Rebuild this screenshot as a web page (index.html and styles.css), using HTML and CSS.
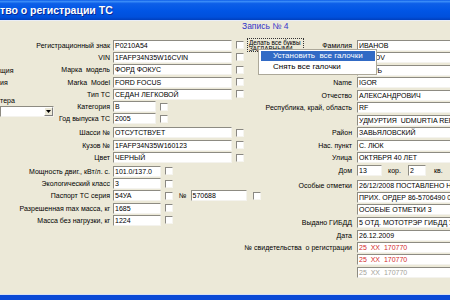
FILE: index.html
```html
<!DOCTYPE html>
<html lang="ru">

<head>
  <meta charset="UTF-8">
  <title>Свидетельство о регистрации ТС</title>
  <link rel="stylesheet" href="styles.css">
</head>

<body>
  <div class="window">
    <header class="titlebar">
      <span class="title">тво о регистрации ТС</span>
    </header>

    <main class="client">
      <!-- край соседней панели -->
      <section class="side">
        <div class="side-label">щия</div>
        <div class="side-label">ия</div>
        <div class="side-label side-gap">тера</div>
        <div class="combo">
          <span class="combo-btn">
            <svg width="5" height="3" viewBox="0 0 5 3"><path d="M0 0h5L2.5 3z" fill="#000"/></svg>
          </span>
        </div>
      </section>

      <!-- данные ТС -->
      <section class="form-left">
        <div class="row">
          <span class="lbl">Регистрационный знак</span>
          <span class="field w-wide">P0210A54</span>
          <span class="check"></span>
          <span class="focus-box">Делать все буквы<br>ЗАГЛАВНЫМИ</span>
        </div>
        <div class="row">
          <span class="lbl">VIN</span>
          <span class="field w-wide">1FAFP34N35W16CVIN</span>
          <span class="check"></span>
        </div>
        <div class="row">
          <span class="lbl">Марка&nbsp; модель</span>
          <span class="field w-wide">ФОРД ФОКУС</span>
          <span class="check"></span>
        </div>
        <div class="row">
          <span class="lbl">Marka&nbsp; Model</span>
          <span class="field w-wide">FORD FOCUS</span>
          <span class="check"></span>
        </div>
        <div class="row">
          <span class="lbl">Тип ТС</span>
          <span class="field w-wide">СЕДАН ЛЕГКОВОЙ</span>
          <span class="check"></span>
        </div>
        <div class="row">
          <span class="lbl">Категория</span>
          <span class="field w-xs">B</span>
          <span class="check"></span>
        </div>
        <div class="row">
          <span class="lbl">Год выпуска ТС</span>
          <span class="field w-xs">2005</span>
          <span class="check"></span>
        </div>

        <div class="row row-b first-b">
          <span class="lbl">Шасси №</span>
          <span class="field w-wide">ОТСУТСТВУЕТ</span>
          <span class="check"></span>
        </div>
        <div class="row row-b">
          <span class="lbl">Кузов №</span>
          <span class="field w-wide">1FAFP34N35W160123</span>
          <span class="check"></span>
        </div>
        <div class="row row-b">
          <span class="lbl">Цвет</span>
          <span class="field w-wide">ЧЕРНЫЙ</span>
          <span class="check"></span>
        </div>

        <div class="row row-c first-c">
          <span class="lbl">Мощность двиг., кВт/л. с.</span>
          <span class="field w-sm">101.0/137.0</span>
          <span class="check"></span>
        </div>
        <div class="row row-c">
          <span class="lbl">Экологический класс</span>
          <span class="field w-sm">3</span>
          <span class="check"></span>
        </div>
        <div class="row row-c">
          <span class="lbl">Паспорт ТС серия</span>
          <span class="field w-sm">54УА</span>
          <span class="check"></span>
          <span class="num-lbl">№</span>
          <span class="field w-num">570688</span>
          <span class="check check-far"></span>
        </div>
        <div class="row row-c">
          <span class="lbl">Разрешенная max масса, кг</span>
          <span class="field w-sm">1685</span>
          <span class="check"></span>
        </div>
        <div class="row row-c">
          <span class="lbl">Масса без нагрузки, кг</span>
          <span class="field w-sm">1224</span>
          <span class="check"></span>
        </div>
      </section>

      <!-- данные владельца -->
      <section class="form-right">
        <div class="record">Запись № 4</div>

        <div class="row">
          <span class="lbl">Фамилия</span>
          <span class="field">ИВАНОВ</span>
        </div>
        <div class="row">
          <span class="lbl"></span>
          <span class="field">IVANOV</span>
        </div>
        <div class="row">
          <span class="lbl"></span>
          <span class="field">ИГОРЬ</span>
        </div>
        <div class="row">
          <span class="lbl">Name</span>
          <span class="field">IGOR</span>
        </div>
        <div class="row">
          <span class="lbl">Отчество</span>
          <span class="field">АЛЕКСАНДРОВИЧ</span>
        </div>
        <div class="row">
          <span class="lbl">Республика, край, область</span>
          <span class="field">RF</span>
        </div>
        <div class="row">
          <span class="lbl"></span>
          <span class="field">УДМУРТИЯ&nbsp; UDMURTIA REPUBLIC</span>
        </div>
        <div class="row">
          <span class="lbl">Район</span>
          <span class="field">ЗАВЬЯЛОВСКИЙ</span>
        </div>
        <div class="row">
          <span class="lbl">Нас. пункт</span>
          <span class="field">С. ЛЮК</span>
        </div>
        <div class="row">
          <span class="lbl">Улица</span>
          <span class="field">ОКТЯБРЯ 40 ЛЕТ</span>
        </div>
        <div class="row">
          <span class="lbl">Дом</span>
          <span class="field w-house">13</span>
          <span class="mini-lbl">кор.</span>
          <span class="field w-korp">2</span>
          <span class="mini-lbl kv">кв.</span>
        </div>

        <div class="row row-n first-n">
          <span class="lbl">Особые отметки</span>
          <span class="field">26/12/2008 ПОСТАВЛЕНО НА УЧЕТ</span>
        </div>
        <div class="row row-n">
          <span class="lbl"></span>
          <span class="field">ПРИХ. ОРДЕР 86-5706490 01.12.2008</span>
        </div>
        <div class="row row-n">
          <span class="lbl"></span>
          <span class="field">ОСОБЫЕ ОТМЕТКИ 3</span>
        </div>

        <div class="row row-d first-d">
          <span class="lbl">Выдано ГИБДД</span>
          <span class="field">5 ОТД. МОТОТРЭР ГИБДД УВД</span>
        </div>
        <div class="row row-d">
          <span class="lbl">Дата</span>
          <span class="field">26.12.2009</span>
        </div>
        <div class="row row-d">
          <span class="lbl">№ свидетельства&nbsp; о регистрации</span>
          <span class="field red">25&nbsp; ХХ&nbsp; 170770</span>
        </div>
        <div class="row row-d">
          <span class="lbl"></span>
          <span class="field red">25&nbsp; ХХ&nbsp; 170770</span>
        </div>
        <div class="row row-d">
          <span class="lbl"></span>
          <span class="field muted">25&nbsp; ХХ&nbsp; 170770</span>
        </div>
      </section>
    </main>

    <div class="frame-bottom"></div>

    <!-- контекстное меню -->
    <nav class="popup">
      <div class="menu-item active">Установить&nbsp; все галочки</div>
      <div class="menu-item">Снять все галочки</div>
    </nav>
  </div>
</body>

</html>
```

FILE: styles.css
```css
html {
  box-sizing: border-box;
  font-family: "Liberation Sans", Arial, sans-serif;
  font-size: 7px;
}

*,
*::before,
*::after {
  box-sizing: inherit;
}

body {
  margin: 0;
  width: 450px;
  height: 300px;
  overflow: hidden;
  background-color: #ece9d8;
  color: #000;
}

.window {
  position: relative;
  height: 300px;
  display: flex;
  flex-direction: column;
}

/* заголовок окна */
.titlebar {
  flex: none;
  height: 21px;
  display: flex;
  align-items: center;
  background: linear-gradient(#0a5ae6 0%, #3a8cf8 7%, #0d5fe8 18%, #0055e5 55%, #0050dc 85%, #003fbd 100%);
  border-bottom: 1px solid #e9edf7;
}

.title {
  color: #fff;
  font-weight: bold;
  font-size: 10.5px;
  white-space: nowrap;
  text-shadow: 1px 1px #0b2a94;
}

/* клиентская часть: панели лежат в одной ячейке */
.client {
  flex: 1;
  display: grid;
  grid-template: 1fr / 1fr;
  min-height: 0;
}

.client > section {
  grid-area: 1 / 1;
}

.frame-bottom {
  flex: none;
  height: 6px;
  background-color: #0a49d6;
  border-top: 1px solid #d8e0f2;
}

/* общие элементы */
.row {
  display: flex;
  align-items: center;
  height: 12.3px;
  white-space: nowrap;
}

.lbl {
  flex: none;
  text-align: right;
}

.field {
  flex: none;
  height: 11px;
  line-height: 9px;
  padding-left: 1px;
  overflow: hidden;
  background-color: #fff;
  border: 1px solid;
  border-color: #8d8b82 #f4f3ee #f4f3ee #8d8b82;
  white-space: nowrap;
}

.check {
  flex: none;
  width: 8px;
  height: 8px;
  margin-left: 4px;
  background-color: #fff;
  border: 1px solid;
  border-color: #8a8882 #f6f5f0 #f6f5f0 #8a8882;
}

/* соседняя панель слева */
.side {
  padding-top: 44px;
  display: flex;
  flex-direction: column;
  align-items: flex-start;
}

.side-label {
  line-height: 12px;
}

.side-gap {
  margin-top: 7px;
  line-height: 10px;
}

.combo {
  width: 54px;
  height: 11px;
  background-color: #fff;
  border: 1px solid;
  border-color: #8d8b82 #f4f3ee #f4f3ee #8d8b82;
  display: flex;
  justify-content: flex-end;
}

.combo-btn {
  width: 9px;
  display: flex;
  align-items: center;
  justify-content: center;
  background-color: #ece9d8;
  border: 1px solid;
  border-color: #fff #808080 #808080 #fff;
}

/* левая форма */
.form-left {
  padding-top: 18px;
}

.form-left .lbl {
  width: 113px;
  padding-right: 3px;
}

.w-wide {
  width: 119px;
}

.w-xs {
  width: 43px;
}

.w-sm {
  width: 48px;
}

.w-num {
  width: 56px;
  margin-left: 4px;
}

.num-lbl {
  margin-left: 6px;
}

.check-far {
  margin-left: 6px;
}

.focus-box {
  margin-left: 3px;
  width: 57px;
  height: 14px;
  font-size: 6.3px;
  line-height: 5.5px;
  overflow: hidden;
  padding: 1px 0 0 1px;
  border: 1px dotted #333;
}

.row-b {
  height: 12.5px;
}

.first-b {
  margin-top: 1.3px;
}

.row-c {
  height: 12.2px;
}

.first-c {
  margin-top: 1.5px;
}

/* правая форма */
.form-right {
  display: flex;
  flex-direction: column;
}

.record {
  padding-left: 242px;
  height: 10px;
  line-height: 10px;
  margin-bottom: 8px;
  font-size: 8.5px;
  color: #3535c8;
}

.form-right .row {
  height: 12.5px;
}

.form-right .lbl {
  width: 357px;
  padding-right: 5px;
}

.form-right .field {
  width: 150px;
}

.form-right .w-house {
  width: 25px;
}

.form-right .w-korp {
  width: 18px;
}

.mini-lbl {
  margin: 0 7px 0 6px;
}

.kv {
  margin-left: 8px;
}

.form-right .row-n {
  height: 12px;
}

.first-n {
  margin-top: 2.5px;
}

.form-right .row-d {
  height: 12.3px;
}

.first-d {
  margin-top: 1.8px;
}

.red {
  color: #d42a2a;
}

.muted {
  color: #a5a39a;
}

/* всплывающее меню */
.popup {
  position: absolute;
  left: 258px;
  top: 49px;
  width: 119px;
  height: 26px;
  padding: 1px 1px 1px 2px;
  background-color: #fff;
  border: 1px solid #aca899;
  font-size: 8px;
}

.menu-item {
  height: 11px;
  line-height: 11px;
  padding-left: 12px;
  white-space: nowrap;
}

.menu-item.active {
  height: 10px;
  line-height: 10px;
  background-color: #316ac5;
  color: #fff;
}
```
